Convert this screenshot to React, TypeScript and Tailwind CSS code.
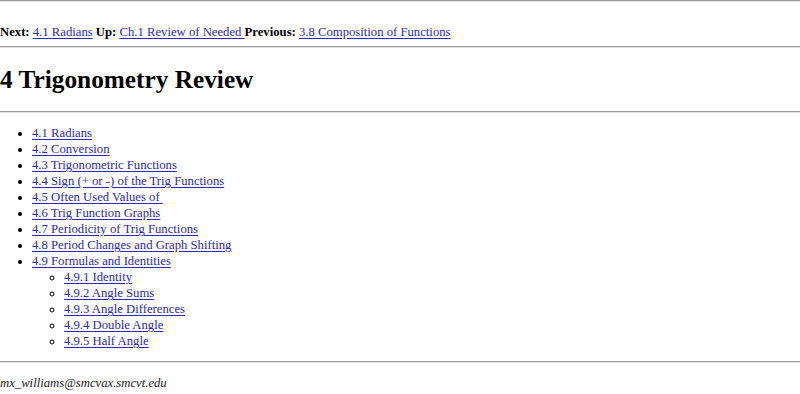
const topics = [
  "4.1 Radians",
  "4.2 Conversion",
  "4.3 Trigonometric Functions",
  "4.4 Sign (+ or -) of the Trig Functions",
  "4.5 Often Used Values of\u00a0",
  "4.6 Trig Function Graphs",
  "4.7 Periodicity of Trig Functions",
  "4.8 Period Changes and Graph Shifting",
];

const subTopics = [
  "4.9.1 Identity",
  "4.9.2 Angle Sums",
  "4.9.3 Angle Differences",
  "4.9.4 Double Angle",
  "4.9.5 Half Angle",
];

const Rule = () => (
  <div className="h-[2px] border-t border-t-[#9a9a9a] border-b border-b-[#e4e4e4]" />
);

const Link = ({ children }: { children: React.ReactNode }) => (
  <a href="#" className="text-[#2a2ab8] underline underline-offset-[2px]">
    {children}
  </a>
);

const App = () => {
  return (
    <div className="font-['Liberation_Serif',serif] text-[12.7px] leading-[16px] text-black bg-white min-h-[394px]">
      <Rule />

      {/* Navigation */}
      <p className="mt-[22px] mb-[6px]">
        <b>Next:</b> <Link>4.1 Radians</Link> <b>Up:</b>{" "}
        <Link>Ch.1 Review of Needed&nbsp;</Link>
        <b>Previous:</b> <Link>3.8 Composition of Functions</Link>
      </p>
      <Rule />

      <h1 className="mt-[16px] mb-[17px] text-[25.3px] leading-[30px] font-bold">
        4 Trigonometry Review
      </h1>
      <Rule />

      {/* Contents */}
      <ul className="mt-[12px] mb-[12px] pl-[32px] list-disc">
        {topics.map((t) => (
          <li key={t}>
            <Link>{t}</Link>
          </li>
        ))}
        <li>
          <Link>4.9 Formulas and Identities</Link>
          <ul className="pl-[32px] list-[circle]">
            {subTopics.map((s) => (
              <li key={s}>
                <Link>{s}</Link>
              </li>
            ))}
          </ul>
        </li>
      </ul>
      <Rule />

      <address className="mt-[12px] italic text-[#222]">mx_williams@smcvax.smcvt.edu</address>
    </div>
  );
};

export default App;
